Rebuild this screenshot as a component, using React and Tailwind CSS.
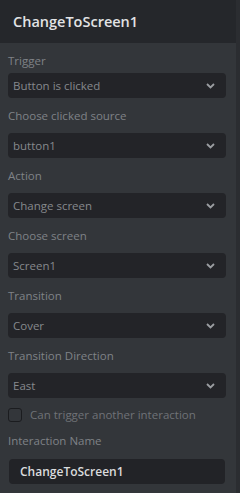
import React from "react";

const Chevron = () => (
  <svg width="9" height="6" viewBox="0 0 9 6" className="shrink-0">
    <path d="M1 1l3.5 3.5L8 1" fill="none" stroke="#9a9da1" strokeWidth="1.8" />
  </svg>
);

const Select = ({ value }) => (
  <div className="flex h-[25px] w-[218px] items-center justify-between rounded-[4px] bg-[#232428] pl-[5px] pr-[11px] text-[11.5px] leading-none text-[#86898d]">
    <span>{value}</span>
    <Chevron />
  </div>
);

const Field = ({ label, value, first }) => (
  <div className="mt-[10px]">
    <div className={`h-[16px] text-[11.5px] leading-[16px] text-[#7f8287] ${first ? "mb-[4px]" : "mb-[9px]"}`}>
      {label}
    </div>
    <Select value={value} />
  </div>
);

const fields = [
  ["Trigger", "Button is clicked"],
  ["Choose clicked source", "button1"],
  ["Action", "Change screen"],
  ["Choose screen", "Screen1"],
  ["Transition", "Cover"],
  ["Transition Direction", "East"],
];

export default function App() {
  return (
    <div
      className="flex h-[493px] w-[240px] overflow-hidden bg-[#2b2d31]"
      style={{ fontFamily: '"Open Sans", sans-serif' }}
    >
      <div className="flex w-[236px] flex-col">
        <div className="flex h-[43px] shrink-0 items-center bg-[#25272b] px-[13px] text-[14.5px] font-semibold text-[#e2e3e5]">
          ChangeToScreen1
        </div>
        <div className="flex-1 bg-[#33363a] px-[8px]">
          {fields.map(([label, value], i) => (
            <Field key={label} label={label} value={value} first={i === 0} />
          ))}
          <div className="mt-[10px] flex h-[14px] items-center gap-[8px]">
            <div className="h-[14px] w-[14px] rounded-[3px] border-[1.5px] border-[#1b1c1f]" />
            <span className="text-[11.5px] leading-none text-[#6f7277]">
              Can trigger another interaction
            </span>
          </div>
          <div className="mt-[11px] mb-[10px] h-[16px] text-[11.5px] leading-[16px] text-[#7f8287]">
            Interaction Name
          </div>
          <div className="ml-[1px] flex h-[25px] w-[216px] items-center rounded-[4px] bg-[#222327] px-[11px] text-[12px] font-semibold leading-none text-[#dadbdd]">
            ChangeToScreen1
          </div>
        </div>
      </div>
    </div>
  );
}
